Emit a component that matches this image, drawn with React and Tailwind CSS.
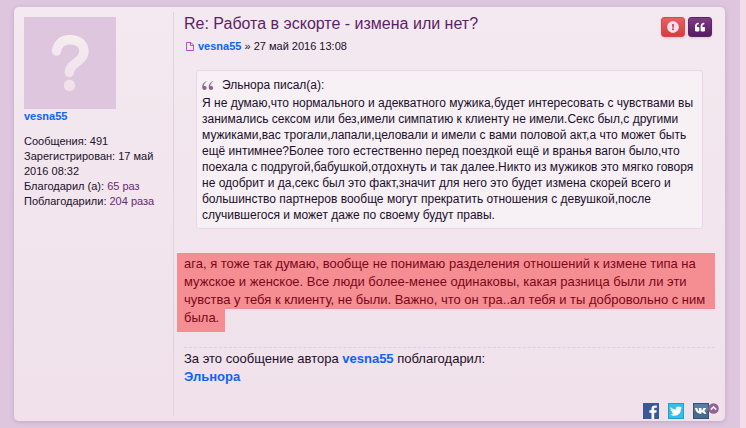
import { FaExclamationCircle, FaQuoteLeft } from "react-icons/fa";

const profileStats = [
  { label: "Сообщения", value: "491" },
  { label: "Зарегистрирован", value: "17 май 2016 08:32" },
  { label: "Благодарил (а)", value: "65 раз", linked: true },
  { label: "Поблагодарили", value: "204 раза", linked: true },
];

const UserLink = ({ children }) => (
  <a href="#user" className="font-bold text-[#0a64ff] hover:underline">
    {children}
  </a>
);

const Avatar = () => (
  <a href="#user" aria-label="vesna55" className="block size-[92px] bg-[#dec6de]">
    <svg viewBox="0 0 92 92" className="size-full">
      <defs>
        <linearGradient id="avatarMark" gradientUnits="userSpaceOnUse" x1="0" y1="18" x2="0" y2="74">
          <stop offset="0" stopColor="#f5efe8" />
          <stop offset="0.2" stopColor="#f4e9f1" />
          <stop offset="1" stopColor="#f0e0ea" />
        </linearGradient>
      </defs>
      <path
        d="M32.500 34C33.500 27 38 22.700 46 22.700C54 22.700 60 27 60 34C60 45 45.300 46 45.300 55.500"
        fill="none"
        stroke="url(#avatarMark)"
        strokeWidth="9.400"
        strokeLinecap="round"
      />
      <circle cx="45.500" cy="68.500" r="5.700" fill="url(#avatarMark)" />
    </svg>
  </a>
);

const Profile = () => (
  <aside className="w-40 shrink-0 border-r border-[#e6cfe1] pt-[5px] pr-3 pl-[10px] text-[11px] leading-[15px]">
    <Avatar />
    <UserLink>vesna55</UserLink>
    <ul className="mt-[10px]">
      {profileStats.map((stat) =>
        stat.linked ? (
          <li key={stat.label}>
            {stat.label}:{" "}
            <a href="#thanks" className="text-[#6b2a70]">
              {stat.value}
            </a>
          </li>
        ) : (
          <li key={stat.label}>{`${stat.label}: ${stat.value}`}</li>
        )
      )}
    </ul>
  </aside>
);

const PostButtons = () => (
  <div className="mt-[5px] mr-[3px] flex gap-[3px] text-[#fbe0f2]">
    <button
      type="button"
      aria-label="Пожаловаться"
      className="flex h-5 w-6 items-center justify-center rounded-[3px] border border-[#d94848] bg-linear-to-b from-[#e16262] to-[#d63c3c] text-[12px] shadow-sm"
    >
      <FaExclamationCircle />
    </button>
    <button
      type="button"
      aria-label="Цитировать"
      className="flex h-5 w-6 items-center justify-center rounded-[3px] border border-[#5e2267] bg-linear-to-b from-[#7d3c85] to-[#571b60] text-[10px] text-white shadow-sm"
    >
      <FaQuoteLeft />
    </button>
  </div>
);

const Quote = () => (
  <blockquote className="mt-4 mr-3 ml-3 rounded-[3px] border border-[#e9d6e6] bg-[#f7f0f5] px-[5px] pt-[6px] pb-[5px] text-[12px] leading-4">
    <cite className="flex items-center gap-2 pb-[2px] not-italic">
      <svg viewBox="0 0 12 9" className="h-[9px] w-3 text-[#8d648d]" fill="currentColor">
        <path d="M4.800 0C2 1 .2 3.300 .2 6C.2 7.900 1.100 9 2.500 9C3.800 9 4.600 8.200 4.600 7C4.600 5.800 3.800 5.100 2.600 5.100C2.200 5.100 1.900 5.200 1.700 5.300C1.800 3.200 3 1.600 4.800 .6ZM11.300 0C8.500 1 6.700 3.300 6.700 6C6.700 7.900 7.600 9 9 9C10.300 9 11.100 8.200 11.100 7C11.100 5.800 10.300 5.100 9.100 5.100C8.700 5.100 8.400 5.200 8.200 5.300C8.300 3.200 9.500 1.600 11.300 .6Z" />
      </svg>
      Эльнора писал(а):
    </cite>
    Я не думаю,что нормального и адекватного мужика,будет интересовать с чувствами вы занимались
    сексом или без,имели симпатию к клиенту не имели.Секс был,с другими мужиками,вас
    трогали,лапали,целовали и имели с вами половой акт,а что может быть ещё интимнее?Более того
    естественно перед поездкой ещё и вранья вагон было,что поехала с подругой,бабушкой,отдохнуть и
    так далее.Никто из мужиков это мягко говоря не одобрит и да,секс был это факт,значит для него
    это будет измена скорей всего и большинство партнеров вообще могут прекратить отношения с
    девушкой,после случившегося и может даже по своему будут правы.
  </blockquote>
);

const ShareLinks = () => (
  <div className="relative mr-[6px] flex gap-[9px] self-end">
    <a href="#facebook" aria-label="Facebook">
      <svg viewBox="0 0 16 16" className="size-4">
        <path fill="#3b5998" d="M0 0h16v16H0z" />
        <path
          fill="#fff"
          d="M8.500 16V9.800H6.400V7.300h2.100V5.600C8.500 3.500 9.800 2.400 11.800 2.400h2v2.400h-1.300c-1 0-1.300.5-1.300 1.200v1.300h2.500l-.4 2.500h-2.100V16Z"
        />
      </svg>
    </a>
    <a href="#twitter" aria-label="Twitter">
      <svg viewBox="0 0 16 16" className="size-4">
        <path fill="#239ed0" d="M0 0h16v16H0z" />
        <path fill="#2fc0ec" d="M1 1h14v14H1z" />
        <path
          fill="#fff"
          d="M2.500 4C4 5.600 5.700 6.300 7.800 6.400C7.500 4.800 8.600 3.500 10.200 3.500C11 3.500 11.600 3.800 12 4.200L13.600 3.700L12.700 5L13.900 4.800L12.900 6C13 10 10.200 12.700 6.500 12.700C4.900 12.700 3.500 12.300 2.400 11.500C3.800 11.600 4.900 11.200 5.700 10.600C4.600 10.500 3.900 9.900 3.600 9H4.500C3.300 8.600 2.600 7.700 2.600 6.600L3.600 6.900C2.500 6.100 2.100 5.100 2.500 4Z"
        />
      </svg>
    </a>
    <a href="#vk" aria-label="ВКонтакте">
      <svg viewBox="0 0 16 16" className="size-4">
        <path fill="#365375" d="M0 0h16v16H0z" />
        <path fill="#587da4" d="M1 1h14v7H1z" />
        <path fill="#456a91" d="M1 8h14v7H1z" />
        <path
          fill="#fff"
          d="M2 5h2.200C4.700 6.600 5.300 7.800 6 8V6.200L5.500 5H8.500V7.500C9.300 7.200 10 6.200 10.500 5H13C12.800 6.300 12.100 7 11.200 7.900C12.200 8.700 13 9.500 13.400 10.700H11C10.400 9.900 9.600 9.200 8.500 8.900V10.700H7.200C4.600 10.700 2.700 8.500 2 5Z"
        />
      </svg>
    </a>
    <a href="#top" aria-label="Вернуться к началу" className="absolute top-0 -right-[10px]">
      <svg viewBox="0 0 11 11" className="size-[11px]">
        <circle cx="5.500" cy="5.500" r="5.300" fill="#8f6491" />
        <path d="M2.800 6.700L5.500 4L8.200 6.700" fill="none" stroke="#f3e3f0" strokeWidth="1.700" />
      </svg>
    </a>
  </div>
);

const PostBody = () => (
  <div className="flex min-w-0 grow flex-col pl-[10px]">
    <header className="flex items-start justify-between">
      <div>
        <h3 className="text-[16px] leading-6 text-[#5c1f66]">
          <a href="#post">Re: Работа в эскорте - измена или нет?</a>
        </h3>
        <p className="mt-[2px] flex items-center gap-[3px] text-[11px] leading-4">
          <a href="#post" aria-label="Сообщение" className="flex w-[11px] justify-center">
            <svg viewBox="0 0 8 9" className="h-[9px] w-2" fill="none" stroke="#bb4fc4">
              <path d="M.5 .5H5L7.500 3V8.500H.5ZM4.500 .5V3.500H7.500" />
            </svg>
          </a>
          <span>
            <UserLink>vesna55</UserLink> » 27 май 2016 13:08
          </span>
        </p>
      </div>
      <PostButtons />
    </header>

    <Quote />

    <div className="mt-6 -ml-[7px] text-[13px] leading-[18px] text-[#7c0618]">
      <p className="bg-[#f48e93] pt-[2px] pr-2 pl-[7px]">
        ага, я тоже так думаю, вообще не понимаю разделения отношений к измене типа на мужское и
        женское. Все люди более-менее одинаковы, какая разница были ли эти чувства у тебя к клиенту,
        не были. Важно, что он тра..ал тебя и ты добровольно с ним
      </p>
      <p className="w-fit bg-[#f48e93] pr-[6px] pb-[5px] pl-[7px]">была.</p>
    </div>

    <div className="mt-[15px] border-t border-dashed border-[#e4cde0] pt-[2px] text-[13px] leading-[18px]">
      <p>
        За это сообщение автора <UserLink>vesna55</UserLink> поблагодарил:
      </p>
      <UserLink>Эльнора</UserLink>
    </div>

    <div className="mt-[17px] -mb-[3px] flex flex-col">
      <ShareLinks />
    </div>
  </div>
);

const App = () => {
  return (
    <div className="min-h-screen bg-[#f0dfe9] pr-[6px] font-['Liberation_Sans',Arial,sans-serif] text-[#210f2b]">
      <main className="min-h-screen bg-[#dec6de] pt-[7px] pr-[15px] pb-[7px] pl-[14px]">
        <article className="flex rounded-[5px] bg-linear-to-b from-[#f4e9f0] to-[#f0e1ea] py-[5px] pr-[10px] shadow-[0_1px_4px_rgba(120,70,130,0.25)]">
          <Profile />
          <PostBody />
        </article>
      </main>
    </div>
  );
};

export default App;
